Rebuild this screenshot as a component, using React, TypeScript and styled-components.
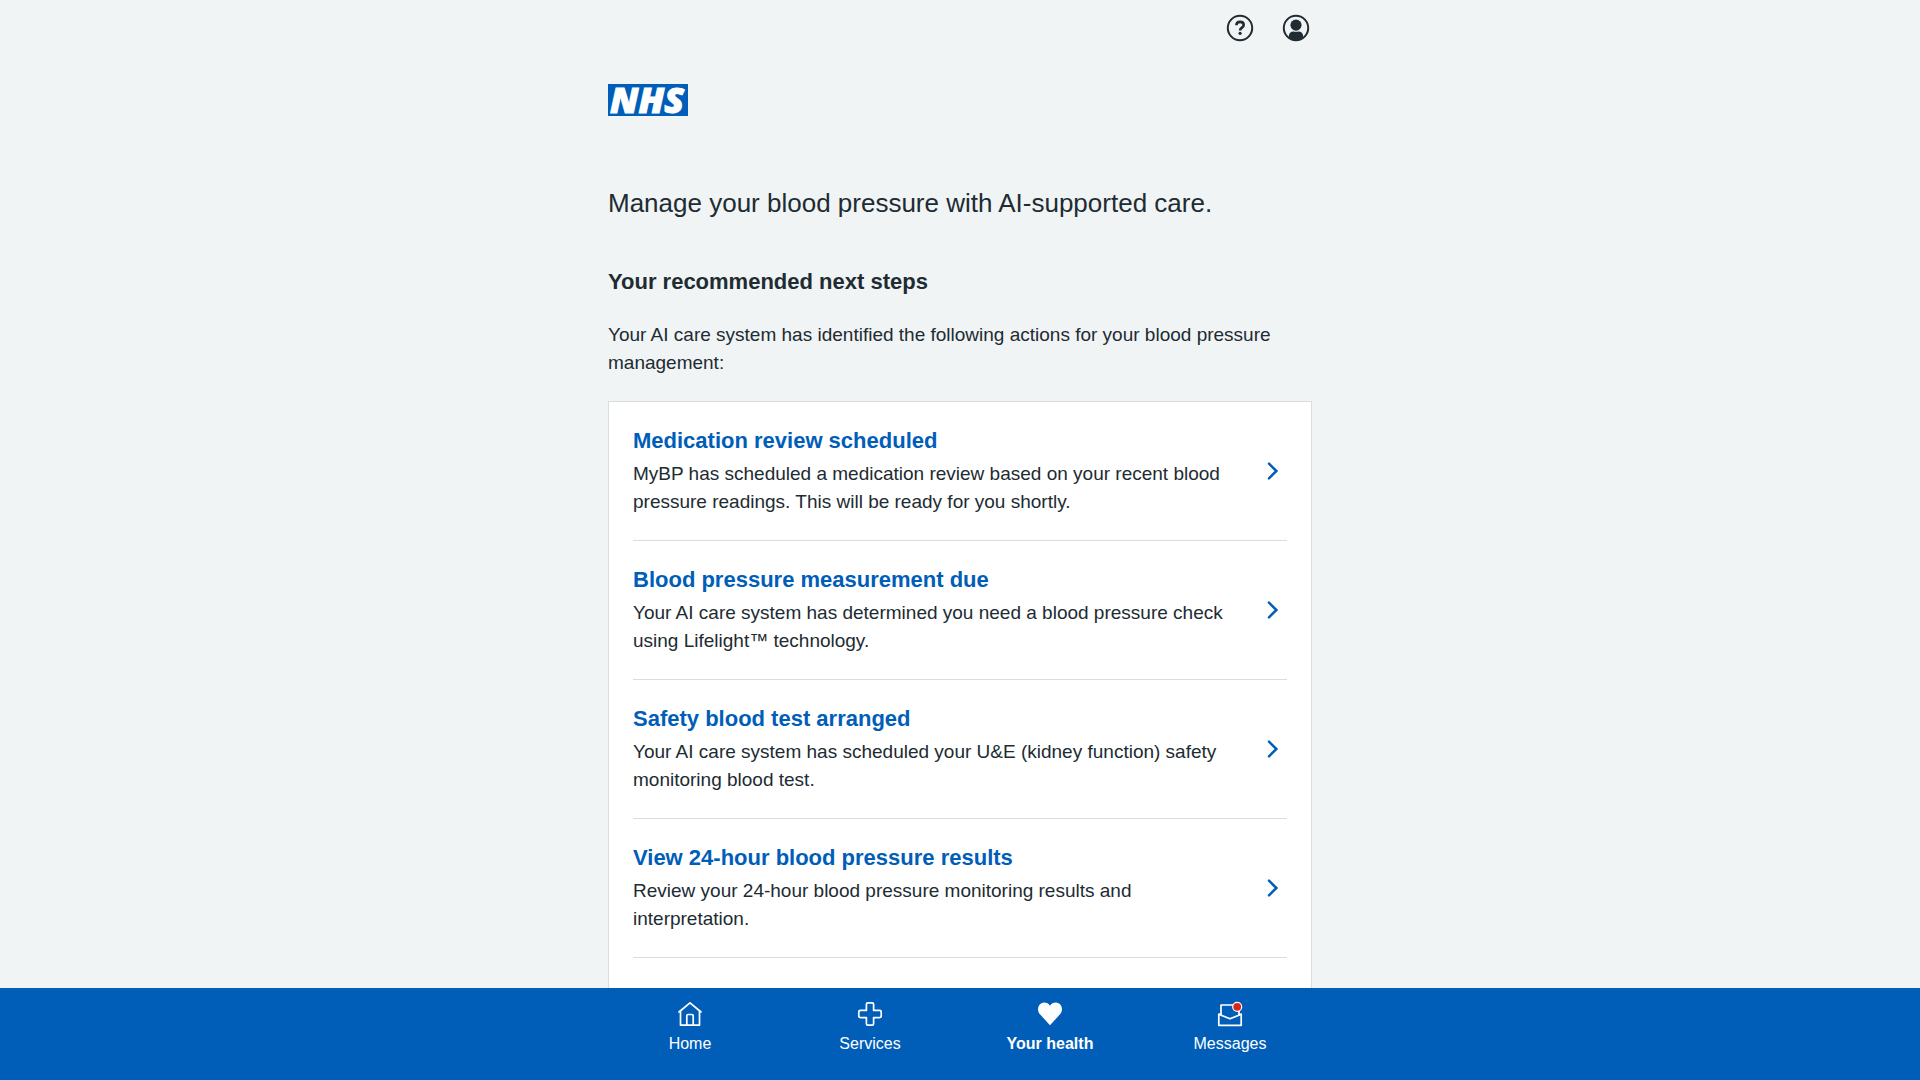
import React from "react";
import styled, { createGlobalStyle } from "styled-components";

const color = {
  page: "#f0f4f5",
  text: "#212b32",
  blue: "#005eb8",
  border: "#d8dde0",
  white: "#ffffff",
  red: "#d5281b",
};

const GlobalStyle = createGlobalStyle`
  *, *::before, *::after { box-sizing: border-box; }
  body {
    margin: 0;
    background: ${color.page};
    color: ${color.text};
    font-family: "Liberation Sans", Arial, sans-serif;
    font-size: 19px;
    line-height: 28px;
  }
`;

const Page = styled.div`
  display: flex;
  flex-direction: column;
  min-height: 100vh;
`;

const Column = styled.div`
  display: flex;
  flex-direction: column;
  width: 100%;
  max-width: 736px;
  margin: 0 auto;
  padding: 0 16px;
`;

const TopBar = styled.header`
  display: flex;
  justify-content: flex-end;
  align-items: center;
  gap: 24px;
  height: 56px;
`;

const IconButton = styled.button`
  display: flex;
  padding: 0;
  border: 0;
  background: none;
  color: inherit;
  cursor: pointer;
`;

const LogoLink = styled.a`
  display: block;
  width: 80px;
  height: 32px;
  margin: 28px 0 68px;
`;

const LogoSvg = styled.svg`
  display: block;
  overflow: visible;
  font-family: "Open Sans", "Liberation Sans", sans-serif;
  font-size: 36px;
  font-style: italic;
  font-weight: 800;
`;

const Main = styled.main`
  display: flex;
  flex: 1;
`;

const Lead = styled.p`
  margin: 0 0 45px;
  font-size: 26px;
  line-height: 38px;
`;

const SectionTitle = styled.h2`
  margin: 0 0 24px;
  font-size: 22px;
  line-height: 30px;
`;

const Intro = styled.p`
  margin: 0 0 24px;
`;

const StepList = styled.ul`
  flex: 1;
  margin: 0;
  padding: 0 24px;
  list-style: none;
  background: ${color.white};
  border: 1px solid ${color.border};
  border-bottom: 0;
`;

const StepItem = styled.li`
  border-bottom: 1px solid ${color.border};
`;

const StepLink = styled.a`
  display: flex;
  align-items: center;
  gap: 32px;
  padding: 24px 0;
  color: inherit;
  text-decoration: none;
`;

const StepText = styled.div`
  flex: 1;
`;

const StepTitle = styled.h3`
  margin: 0 0 4px;
  color: ${color.blue};
  font-size: 22px;
  line-height: 30px;
`;

const StepDescription = styled.p`
  margin: 0;
`;

const NavBar = styled.nav`
  position: sticky;
  bottom: 0;
  background: ${color.blue};
`;

const NavList = styled.ul`
  display: grid;
  grid-template-columns: repeat(4, 1fr);
  max-width: 720px;
  margin: 0 auto;
  padding: 10px 0 24px;
  list-style: none;
`;

const NavLink = styled.a<{ $active?: boolean }>`
  display: flex;
  flex-direction: column;
  align-items: center;
  gap: 2px;
  color: ${color.white};
  font-size: 16px;
  font-weight: ${(p) => (p.$active ? 700 : 400)};
  line-height: 24px;
  text-decoration: none;
`;

const HelpIcon = () => (
  <svg width="32" height="32" viewBox="0 0 32 32" fill="none" stroke="currentColor" strokeWidth="2" aria-hidden="true">
    <circle cx="16" cy="16" r="12.2" />
    <path d="M12.4 13.3c0-2.2 1.6-3.4 3.7-3.4s3.6 1.2 3.6 3.1c0 2.7-3.6 2.6-3.6 5.5" strokeWidth="2.6" />
    <circle cx="16.1" cy="21.3" r="1.6" fill="currentColor" stroke="none" />
  </svg>
);

const AccountIcon = () => (
  <svg width="32" height="32" viewBox="0 0 32 32" aria-hidden="true">
    <circle cx="16" cy="16" r="12.2" fill="none" stroke="currentColor" strokeWidth="2" />
    <circle cx="16" cy="13.1" r="5.6" fill="currentColor" />
    <path d="M8.8 25.6v-1.4c0-3.2 2.1-4.8 4.6-4.8 1.7.6 3.5.6 5.2 0 2.5 0 4.6 1.6 4.6 4.8v1.4c-4 3.2-10.4 3.2-14.4 0z" fill="currentColor" />
  </svg>
);

const Chevron = () => (
  <svg width="28" height="28" viewBox="0 0 28 28" fill="none" stroke={color.blue} strokeWidth="2.5" strokeLinecap="round" aria-hidden="true">
    <path d="M10 6.7 17.4 14 10 21.3" />
  </svg>
);

const NavIcon = ({ children }: { children: React.ReactNode }) => (
  <svg width="32" height="32" viewBox="0 0 32 32" fill="none" stroke="currentColor" strokeWidth="1.7" strokeLinejoin="round" strokeLinecap="round" aria-hidden="true">
    {children}
  </svg>
);

const steps = [
  {
    title: "Medication review scheduled",
    text: "MyBP has scheduled a medication review based on your recent blood pressure readings. This will be ready for you shortly.",
  },
  {
    title: "Blood pressure measurement due",
    text: "Your AI care system has determined you need a blood pressure check using Lifelight™ technology.",
  },
  {
    title: "Safety blood test arranged",
    text: "Your AI care system has scheduled your U&E (kidney function) safety monitoring blood test.",
  },
  {
    title: "View 24-hour blood pressure results",
    text: "Review your 24-hour blood pressure monitoring results and interpretation.",
  },
];

const navItems = [
  {
    label: "Home",
    icon: (
      <>
        <path d="M5 14 16 4.8 27 14" />
        <path d="M6.5 12.9v14.3h19V12.9" />
        <path d="M12.8 27v-9.2q0-1.3 1.3-1.3h3.8q1.3 0 1.3 1.3V27" />
      </>
    ),
  },
  {
    label: "Services",
    icon: (
      <path d="M13.9 4.8h4.2q1.5 0 1.5 1.5v6.1h6.1q1.5 0 1.5 1.5v4.2q0 1.5-1.5 1.5h-6.1v6.1q0 1.5-1.5 1.5h-4.2q-1.5 0-1.5-1.5v-6.1H6.3q-1.5 0-1.5-1.5v-4.2q0-1.5 1.5-1.5h6.1V6.3q0-1.5 1.5-1.5z" />
    ),
  },
  {
    label: "Your health",
    active: true,
    icon: (
      <path
        d="M16 27.2 6.2 16.6C3 13.1 3.4 7.8 7 5.5c3-1.8 7-1 9 2.3 2-3.3 6-4.1 9-2.3 3.6 2.3 4 7.6.8 11.1z"
        fill="currentColor"
        stroke="none"
      />
    ),
  },
  {
    label: "Messages",
    icon: (
      <>
        <path d="M7 16.2V7h14M25 12v4" />
        <path d="M7 16.3H4.8v11h22.4v-11H25" />
        <path d="M4.8 16.3 16 20.8l11.2-4.5" />
        <circle cx="23.2" cy="8.8" r="4.5" fill={color.red} stroke="currentColor" strokeWidth="1.2" />
      </>
    ),
  },
];

export default function App() {
  return (
    <>
      <GlobalStyle />
      <Page>
        <Column>
          <TopBar>
            <IconButton type="button" aria-label="Help">
              <HelpIcon />
            </IconButton>
            <IconButton type="button" aria-label="Account">
              <AccountIcon />
            </IconButton>
          </TopBar>
          <LogoLink href="#home" aria-label="NHS">
            <LogoSvg width="80" height="32" viewBox="0 0 80 32">
              <rect width="80" height="32" fill={color.blue} />
              <text x="39" y="29" textAnchor="middle" fill={color.white} stroke={color.white} strokeWidth="1">
                NHS
              </text>
            </LogoSvg>
          </LogoLink>
        </Column>
        <Main>
          <Column>
            <Lead>Manage your blood pressure with AI-supported care.</Lead>
            <SectionTitle>Your recommended next steps</SectionTitle>
            <Intro>
              Your AI care system has identified the following actions for your blood pressure management:
            </Intro>
            <StepList>
              {steps.map((step) => (
                <StepItem key={step.title}>
                  <StepLink href="#step">
                    <StepText>
                      <StepTitle>{step.title}</StepTitle>
                      <StepDescription>{step.text}</StepDescription>
                    </StepText>
                    <Chevron />
                  </StepLink>
                </StepItem>
              ))}
            </StepList>
          </Column>
        </Main>
        <NavBar>
          <NavList>
            {navItems.map((item) => (
              <li key={item.label}>
                <NavLink href="#nav" $active={item.active} aria-current={item.active ? "page" : undefined}>
                  <NavIcon>{item.icon}</NavIcon>
                  {item.label}
                </NavLink>
              </li>
            ))}
          </NavList>
        </NavBar>
      </Page>
    </>
  );
}
